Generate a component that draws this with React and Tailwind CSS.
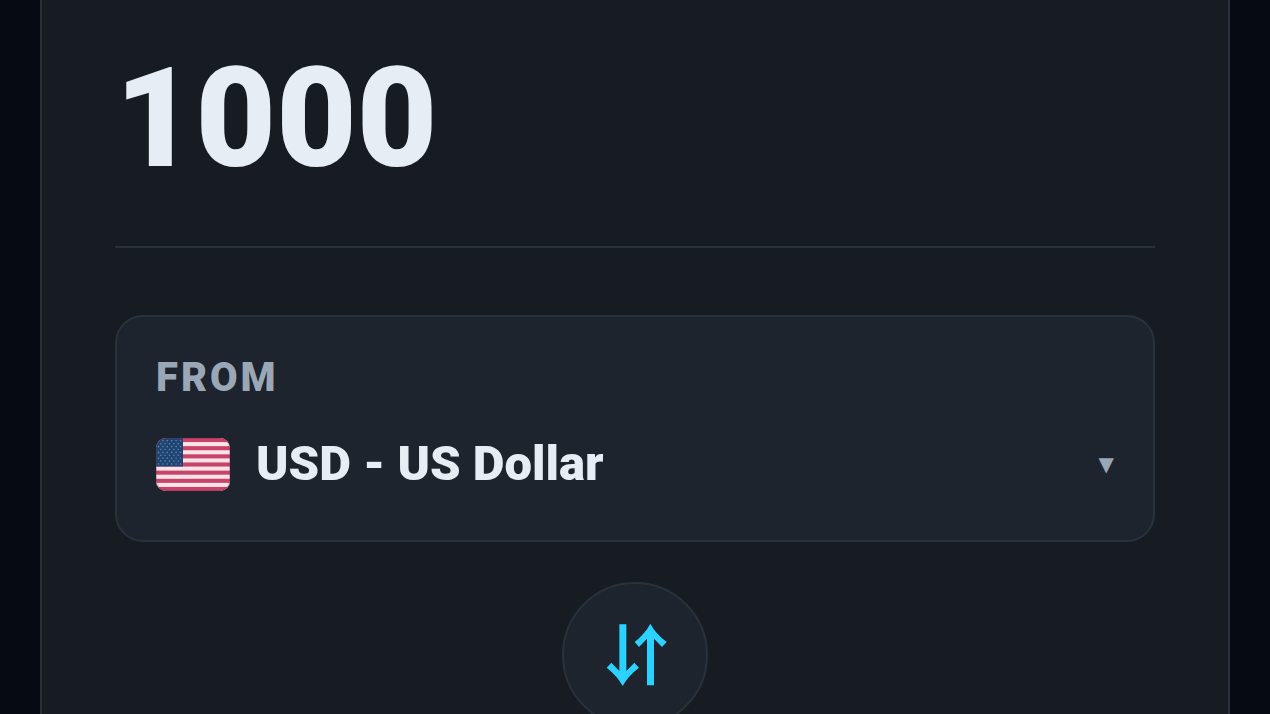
import React, { useState } from "react";

const currencies = [
  { code: "USD", name: "US Dollar" },
];

const starRows = [0, 1, 2, 3, 4, 5, 6, 7, 8];

function UsFlag() {
  return (
    <svg viewBox="0 0 74 53" className="w-[74px] h-[53px] shrink-0 rounded-[10px]" aria-hidden="true">
      <rect width="74" height="53" fill="#fbe3ea" />
      {[0, 2, 4, 6, 8, 10, 12].map((i) => (
        <rect key={i} y={(i * 53) / 13} width="74" height={53 / 13} fill="#c54467" />
      ))}
      <rect width="27" height="28.5" fill="#1f4474" />
      {starRows.map((row) =>
        (row % 2 ? [0, 1, 2, 3, 4] : [0, 1, 2, 3, 4, 5]).map((col) => (
          <circle
            key={`${row}-${col}`}
            cx={2.5 + col * 4.4 + (row % 2 ? 2.2 : 0)}
            cy={2.8 + row * 2.9}
            r="0.8"
            fill="#6488ad"
          />
        ))
      )}
      <rect x="0.5" y="0.5" width="73" height="52" rx="9.5" fill="none" stroke="#8f2347" strokeOpacity="0.3" />
    </svg>
  );
}

function SwapIcon() {
  return (
    <svg viewBox="9 15 192 192" className="size-16" fill="#2bd2ff" aria-hidden="true">
      <path d="M58 19H79V159L103 134L117 149Q84 174 68 204Q52 174 20 149L34 134L58 159Z" />
      <path d="M141 202H162V62L186 87L200 72Q167 47 151 17Q135 47 104 72L117 87L141 62Z" />
    </svg>
  );
}

export default function App() {
  const [amount, setAmount] = useState("1000");
  const [from, setFrom] = useState("USD");

  return (
    <div className="h-screen overflow-hidden bg-[#060a12] px-10 font-['Roboto',sans-serif]">
      <main className="min-h-full border-x-2 border-[#28303a] bg-[#171c23] px-[73px]">
        <div className="border-b-2 border-[#28323b] pt-[34px] pb-11">
          <input
            type="text"
            inputMode="decimal"
            aria-label="Amount"
            value={amount}
            onChange={(e) => setAmount(e.target.value)}
            className="block w-full h-[168px] bg-transparent text-[139px] leading-none font-black text-[#e6edf4] outline-none"
          />
        </div>

        <div className="mt-[67px] rounded-[28px] border-2 border-[#28323c] bg-[#1d242d] px-[39px] pt-9 pb-[33px]">
          <label htmlFor="from" className="block text-[40px] leading-[50px] font-black tracking-[3px] text-[#9aa7b6]">
            FROM
          </label>
          <div className="mt-[18px] flex h-[86px] items-center gap-[26px]">
            <UsFlag />
            <select
              id="from"
              value={from}
              onChange={(e) => setFrom(e.target.value)}
              className="min-w-0 flex-1 appearance-none bg-transparent text-[49px] leading-[64px] font-black text-[#e6edf4] outline-none"
            >
              {currencies.map((c) => (
                <option key={c.code} value={c.code}>
                  {c.code} - {c.name}
                </option>
              ))}
            </select>
            <span className="pointer-events-none font-['DejaVu_Sans',sans-serif] text-[20px] leading-6 text-[#9aa7b6]" aria-hidden="true">
              ▼
            </span>
          </div>
        </div>

        <div className="mt-10 flex justify-center">
          <button
            type="button"
            aria-label="Swap currencies"
            className="flex size-[146px] items-center justify-center rounded-full border-2 border-[#28323c] bg-[#1d242d]"
          >
            <SwapIcon />
          </button>
        </div>
      </main>
    </div>
  );
}
